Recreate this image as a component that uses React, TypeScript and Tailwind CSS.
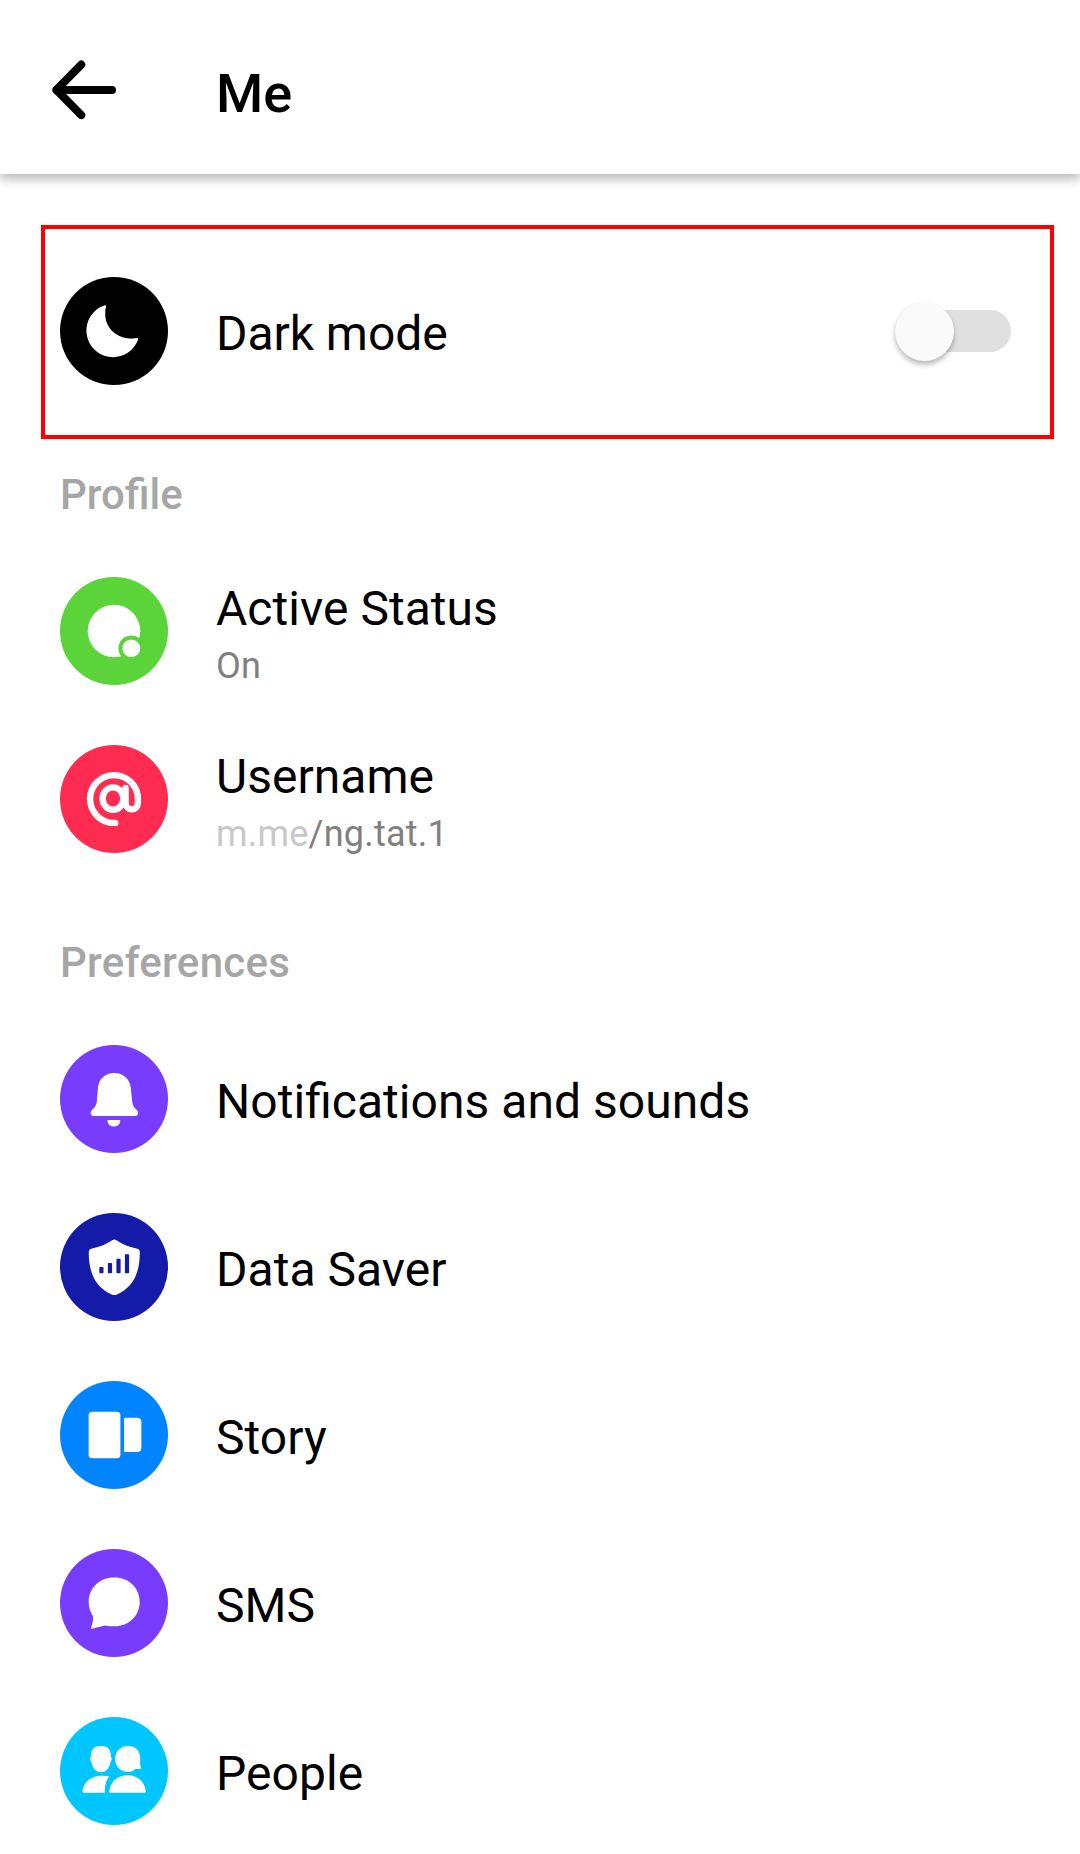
import type { ReactNode } from "react";

function IconCircle({ color, children }: { color: string; children: ReactNode }) {
  return (
    <svg className={`size-[108px] shrink-0 ${color}`} viewBox="0 0 108 108" fill="white">
      <circle cx="54" cy="54" r="54" fill="currentColor" />
      {children}
    </svg>
  );
}

function MoonIcon() {
  return (
    <IconCircle color="text-black">
      <path d="M44.3 28.4A26.6 26.6 0 1 0 77.8 63.2Q79 60.6 76.2 61C61 64 45 53.5 45.2 36.5Q45.2 33 46 29.6Q46.2 27.7 44.3 28.4Z" />
    </IconCircle>
  );
}

function ActiveIcon() {
  return (
    <IconCircle color="text-[#5ad439]">
      <circle cx="54" cy="54" r="26.3" />
      <circle cx="71.3" cy="71.3" r="12.9" fill="currentColor" />
      <circle cx="71.3" cy="71.3" r="8.9" />
    </IconCircle>
  );
}

function AtIcon() {
  return (
    <IconCircle color="text-[#ff2b50]">
      <g fill="none" stroke="white" strokeWidth="6.4" strokeLinecap="round">
        <path d="M55.2 77.9H54A23.9 23.9 0 1 1 77.9 54V57.5C77.9 66.6 65.6 66.6 65.6 57.5V43" />
        <ellipse cx="53" cy="53.6" rx="10.4" ry="11.2" />
      </g>
    </IconCircle>
  );
}

function BellIcon() {
  return (
    <IconCircle color="text-[#783cff]">
      <path d="M54.3 28C45.5 28 38.6 34 37.9 43L36.8 56.5C36.4 60.5 34.8 62.5 32 65C29.6 67.3 30.5 71 33.8 71H75C78.3 71 79.2 67.3 76.8 65C73.9 62.5 72.6 60.5 72.2 56.5L70.8 43C70 34 63.2 28 54.3 28Z" />
      <path d="M48.3 75H59.3Q60.6 75 60.2 76.4A6.5 6.5 0 0 1 47.5 76.4Q47.1 75 48.3 75Z" />
    </IconCircle>
  );
}

function ShieldIcon() {
  return (
    <IconCircle color="text-[#141ba8]">
      <path d="M52.6 26.9Q54.3 25.9 56 26.9C62.5 31.3 69.5 34 77.4 35.7Q79.8 36.2 79.8 38.7C80.2 59 73.2 74.5 57 81.4Q54.3 82.6 51.6 81.4C35.4 74.5 28.4 59 28.8 38.7Q28.8 36.2 31.2 35.7C39.1 34 46.1 31.3 52.6 26.9Z" />
      <g fill="currentColor">
        <rect x="39.3" y="54" width="4.2" height="6.2" rx=".8" />
        <rect x="47.9" y="50" width="4.2" height="10.2" rx=".8" />
        <rect x="56.4" y="45.7" width="4.2" height="14.5" rx=".8" />
        <rect x="64.9" y="41.3" width="4.2" height="18.9" rx=".8" />
      </g>
    </IconCircle>
  );
}

function StoryIcon() {
  return (
    <IconCircle color="text-[#0084ff]">
      <rect x="28.6" y="30.7" width="31.8" height="46.6" rx="3.6" />
      <path d="M65.5 36.7H77Q81.4 36.7 81.4 41V66.8Q81.4 71.1 77 71.1H65.5Q64 71.1 64 69.6V38.2Q64 36.7 65.5 36.7Z" />
    </IconCircle>
  );
}

function ChatIcon() {
  return (
    <IconCircle color="text-[#783cff]">
      <path d="M54.2 28.4C39.5 28.4 28.7 38.8 28.7 52.8C28.7 58.8 30.4 63.3 33 67.2C33.5 71 32.4 75 31.1 78.4Q30.7 80 32.3 79.7C36.5 78.6 41 77.3 45.5 76.4C48.2 77 51 77.3 54.2 77.3C69 77.3 79.7 66.8 79.7 52.8C79.7 38.8 69 28.4 54.2 28.4Z" />
    </IconCircle>
  );
}

function PeopleIcon() {
  return (
    <IconCircle color="text-[#00c6ff]">
      <path d="M41 29C47.5 28.6 50.8 32 51 39.5C52 40.5 51.8 43.5 50.6 45C49.3 51.3 46 55.2 41 55.2C36 55.2 32.6 51.3 31.4 45C30 43.5 29.9 40.5 30.9 39.5C30.8 32 34.5 29 41 29Z" />
      <path d="M68 28.9C76 28.7 80.3 34 80.2 41.5C80.1 45.5 79.8 48.5 81.2 51.2Q81.4 52 80.6 52H75.5C73.5 54 71 55 68 55C60.5 55 55.2 49.5 55.2 42C55.2 34.5 60 29.1 68 28.9Z" />
      <path d="M49.5 59.3C46.5 62.5 45 67 44.7 75.7H23.6Q22.2 75.7 22.4 74.2C23.8 65 31 58.8 41 58.7C44.5 58.7 47.5 58.9 49.5 59.3Z" />
      <path d="M67.5 58.3C77.5 58.3 84.5 64.5 85.8 74.2Q86 75.7 84.5 75.7H50.6Q49.1 75.7 49.3 74.2C50.6 64.5 57.5 58.3 67.5 58.3Z" />
    </IconCircle>
  );
}

function SectionLabel({ tracking = "", children }: { tracking?: string; children: ReactNode }) {
  return <h2 className={`pl-[60px] text-[42px] leading-[50px] font-medium text-[#a6a6a6] ${tracking}`}>{children}</h2>;
}

function Row({ icon, title, subtitle }: { icon: ReactNode; title: string; subtitle?: ReactNode }) {
  return (
    <li className="flex h-[168px] items-center gap-12 pl-[60px]">
      {icon}
      <div className="flex flex-col gap-2 pt-[5px]">
        <span className="text-[48px] leading-[56px] tracking-[0.04px] [font-feature-settings:'liga']">{title}</span>
        {subtitle && <span className="text-[36px] leading-[42px] tracking-[0.22px] text-[#808080]">{subtitle}</span>}
      </div>
    </li>
  );
}

export default function App() {
  return (
    <div className="h-[1854px] w-[1080px] overflow-hidden bg-white font-['Roboto',sans-serif] text-black">
      <header className="flex h-[174px] items-center bg-white pl-[48px] shadow-[0_5px_10px_rgba(0,0,0,0.28)]">
        <svg className="mt-[6px] h-[72px] w-[72px]" viewBox="48 54 72 72" fill="none" stroke="currentColor" strokeWidth="8" strokeLinecap="round" strokeLinejoin="round">
          <path d="M81.3 64.6L56.4 89.9L81.3 115.1M56.4 89.9H112" />
        </svg>
        <h1 className="mt-[13px] ml-24 text-[54px] leading-[64px] font-medium">Me</h1>
      </header>

      <main>
        <section className="mt-[51px] ml-[41px] flex h-[214px] w-[1013px] items-center border-4 border-[#ff0000] pr-[39px] pb-[2px] pl-[15px]">
          <MoonIcon />
          <span className="ml-12 pt-[5px] text-[48px] leading-[56px] tracking-[-0.05px]">Dark mode</span>
          <button role="switch" aria-checked="false" aria-label="Dark mode" className="ml-auto flex h-[42px] w-[116px] items-center rounded-full bg-[#dfdfdf]">
            <span className="size-[59px] shrink-0 rounded-full bg-[#fafafa] shadow-[0_4px_5px_rgba(0,0,0,0.25),0_0_3px_rgba(0,0,0,0.05)]" />
          </button>
        </section>

        <section className="pt-[31px]">
          <SectionLabel>Profile</SectionLabel>
          <ul className="pt-[27px]">
            <Row icon={<ActiveIcon />} title="Active Status" subtitle="On" />
            <Row
              icon={<AtIcon />}
              title="Username"
              subtitle={<><span className="text-[#c8c8c8]">m.me</span>/ng.tat.1</>}
            />
          </ul>
        </section>

        <section className="pt-[55px]">
          <SectionLabel tracking="tracking-[0.3px]">Preferences</SectionLabel>
          <ul className="pt-[27px]">
            <Row icon={<BellIcon />} title="Notifications and sounds" />
            <Row icon={<ShieldIcon />} title="Data Saver" />
            <Row icon={<StoryIcon />} title="Story" />
            <Row icon={<ChatIcon />} title="SMS" />
            <Row icon={<PeopleIcon />} title="People" />
          </ul>
        </section>
      </main>
    </div>
  );
}
